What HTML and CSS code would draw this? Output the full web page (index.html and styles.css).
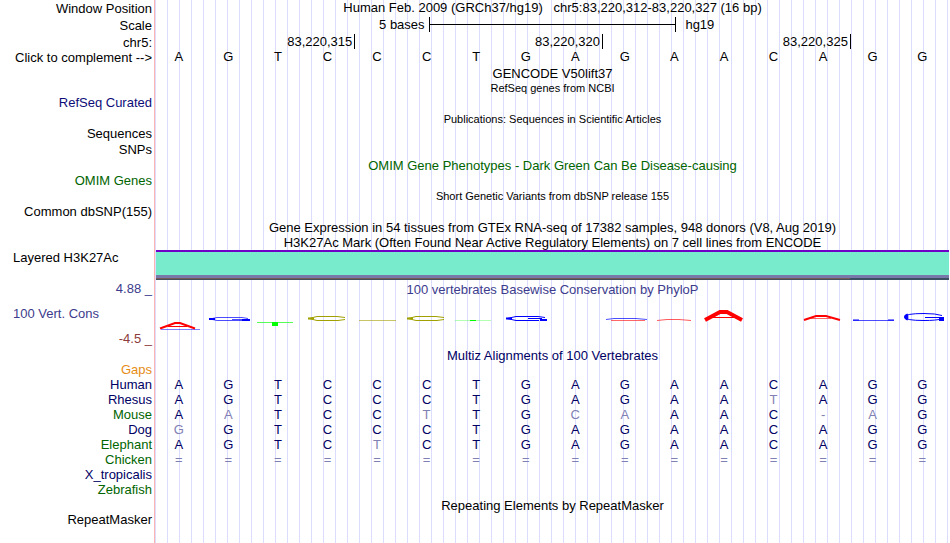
FILE: index.html
```
<!DOCTYPE html>
<html lang="en">
<head>
<meta charset="utf-8">
<title>Genome Browser</title>
<link rel="stylesheet" href="styles.css">
</head>
<body>
<main class="browser">
  <div class="labels">
    <div>Window Position</div>
    <div class="gap-xs">Scale</div>
    <div class="gap-xs">chr5:</div>
    <div>Click to complement --&gt;</div>
    <div class="gap-l navy">RefSeq Curated</div>
    <div class="gap-m">Sequences</div>
    <div class="gap-1">SNPs</div>
    <div class="gap-m green">OMIM Genes</div>
    <div class="gap-m">Common dbSNP(155)</div>
    <div class="gap-xl left">Layered H3K27Ac</div>
    <div class="gap-m slate">4.88 _</div>
    <div class="gap-s left slate">100 Vert. Cons</div>
    <div class="gap-s maroon">-4.5 _</div>
    <div class="gap-m orange">Gaps</div>
    <div class="deep">Human</div>
    <div class="deep">Rhesus</div>
    <div class="green">Mouse</div>
    <div class="deep">Dog</div>
    <div class="green">Elephant</div>
    <div class="green">Chicken</div>
    <div class="deep">X_tropicalis</div>
    <div class="green">Zebrafish</div>
    <div class="gap-n">RepeatMasker</div>
  </div>
  <div class="tracks">
    <div class="caption">Human Feb. 2009 (GRCh37/hg19) &nbsp; chr5:83,220,312-83,220,327 (16 bp)</div>
    <div class="scale gap-xs"><span class="scale-from">5 bases</span><span class="scale-bar"></span><span class="scale-to">hg19</span></div>
    <div class="ticks gap-xs"><span>83,220,315</span><span>83,220,320</span><span>83,220,325</span><span></span></div>
    <div class="bases"><span>A</span><span>G</span><span>T</span><span>C</span><span>C</span><span>C</span><span>T</span><span>G</span><span>A</span><span>G</span><span>A</span><span>A</span><span>C</span><span>A</span><span>G</span><span>G</span></div>
    <div class="caption gap-xs">GENCODE V50lift37</div>
    <div class="caption small">RefSeq genes from NCBI</div>
    <div class="caption small gap-m">Publications: Sequences in Scientific Articles</div>
    <div class="caption green gap-xl">OMIM Gene Phenotypes - Dark Green Can Be Disease-causing</div>
    <div class="caption small gap-m">Short Genetic Variants from dbSNP release 155</div>
    <div class="caption gap-m">Gene Expression in 54 tissues from GTEx RNA-seq of 17382 samples, 948 donors (V8, Aug 2019)</div>
    <div class="caption">H3K27Ac Mark (Often Found Near Active Regulatory Elements) on 7 cell lines from ENCODE</div>
    <div class="signal"><div class="signal-edge"></div></div>
    <div class="caption slate gap-xs">100 vertebrates Basewise Conservation by PhyloP</div>
    <svg class="conservation" viewBox="0 0 793 50" preserveAspectRatio="none" role="img" aria-label="Base conservation scores">
      <g fill="none" stroke="#f00">
        <path stroke-width="2" d="M4 31.500 19 26H24L39 31.500"/><path d="M12 29.500H31"/>
        <path opacity=".65" d="M501 23.500 511 22.500H523L535 23.500"/>
        <path stroke-width="4" d="M549 23 564 15H571L586 23"/><path d="M557 20.500H578"/>
        <path stroke-width="2" d="M648 23 660 19H670L684 23"/><path opacity=".6" d="M655 21.500H675"/>
        <path opacity=".6" d="M455 23.500H489"/>
      </g>
      <g fill="none" stroke="#00f">
        <path opacity=".5" d="M5 32.500H44"/>
        <path opacity=".7" d="M92 21.500 86 20.500H61L54 22 61 23.500H88M76 22.500H90"/><path stroke-width="2" d="M86 23H94M53 22H59"/>
        <path d="M389 20.500 382 19.500H360L351 21.500 360 23.500H383M372 21.500H386"/><path stroke-width="2" d="M384 23H391M350 21.500H356"/>
        <path opacity=".7" d="M450 22.500 458 21.500H480L491 22.500"/>
        <path opacity=".7" d="M697 23.500H738"/><path opacity=".5" stroke-width="2" d="M697 23H703M732 23H738"/>
        <path d="M786 18.500Q780 16.500 768 16.500 749 16.500 749 20 749 23.500 768 23.500 780 23.500 785 22"/><path stroke-width="3" d="M752 18Q747 20 752 22"/><path d="M769 20.500H788"/><path stroke-width="3" d="M783 22.500H788"/>
      </g>
      <g fill="none" stroke="#a0a000">
        <path d="M189 20.500 181 19.500H161L153 21.500 161 23.500H182L189 22.500"/><path stroke-width="2" d="M152 21.500H158"/>
        <path opacity=".6" d="M203 23.500H240"/>
        <path d="M288 20.500 280 19.500H260L252 21.500 260 23.500H281L288 22.500"/><path stroke-width="2" d="M251 21.500H257"/>
      </g>
      <g fill="#0f0"><path opacity=".65" d="M101 25h36v1h-36z"/><path d="M116 25h6v4h-6z"/><path opacity=".3" d="M299 23h36v1h-36z"/><path d="M314 23h6v1h-6z"/></g>
    </svg>
    <div class="caption deep gap-1">Multiz Alignments of 100 Vertebrates</div>
    <div class="alignment deep">
      <div class="bases"><span>A</span><span>G</span><span>T</span><span>C</span><span>C</span><span>C</span><span>T</span><span>G</span><span>A</span><span>G</span><span>A</span><span>A</span><span>C</span><span>A</span><span>G</span><span>G</span></div>
      <div class="bases"><span>A</span><span>G</span><span>T</span><span>C</span><span>C</span><span>C</span><span>T</span><span>G</span><span>A</span><span>G</span><span>A</span><span>A</span><span class="pale">T</span><span>A</span><span>G</span><span>G</span></div>
      <div class="bases"><span>A</span><span class="pale">A</span><span>T</span><span>C</span><span>C</span><span class="pale">T</span><span>T</span><span>G</span><span class="pale">C</span><span class="pale">A</span><span>A</span><span>A</span><span>C</span><span class="pale">-</span><span class="pale">A</span><span>G</span></div>
      <div class="bases"><span class="pale">G</span><span>G</span><span>T</span><span>C</span><span>C</span><span>C</span><span>T</span><span>G</span><span>A</span><span>G</span><span>A</span><span>A</span><span>C</span><span>A</span><span>G</span><span>G</span></div>
      <div class="bases"><span>A</span><span>G</span><span>T</span><span>C</span><span class="pale">T</span><span>C</span><span>T</span><span>G</span><span>A</span><span>G</span><span>A</span><span>A</span><span>C</span><span>A</span><span>G</span><span>G</span></div>
      <div class="bases pale"><span>=</span><span>=</span><span>=</span><span>=</span><span>=</span><span>=</span><span>=</span><span>=</span><span>=</span><span>=</span><span>=</span><span>=</span><span>=</span><span>=</span><span>=</span><span>=</span></div>
    </div>
    <div class="caption gap-xl">Repeating Elements by RepeatMasker</div>
  </div>
</main>
</body>
</html>
```
FILE: styles.css
```
* { box-sizing: border-box; }

body {
  margin: 0;
  background: #fff;
  color: #000;
  font: 13px/15px "Liberation Sans", Arial, sans-serif;
}

.browser {
  display: grid;
  grid-template-columns: 154px 1fr;
  min-height: 100vh;
}

.labels {
  padding: 1px 2px 0 13px;
  text-align: right;
  white-space: nowrap;
}

.labels .left { text-align: left; }

/* Guide lines repeat every 12px behind all tracks. */
.tracks {
  border-left: 1px solid #ffb4b4;
  padding: 0 1px;
  background: linear-gradient(to right, #dcdcff 1px, transparent 1px) 12px 0 / 12px 100% padding-box;
}

.caption { text-align: center; white-space: nowrap; }
.small { font-size: 11px; }

.gap-1 { margin-top: 1px; }
.gap-xs { margin-top: 2px; }
.gap-s { margin-top: 10px; }
.gap-n { margin-top: 15px; }
.gap-m { margin-top: 16px; }
.gap-l { margin-top: 30px; }
.gap-xl { margin-top: 31px; }

.navy { color: #0c0c78; }
.deep { color: #000064; }
.green { color: #006400; }
.slate { color: #3c3c8c; }
.maroon { color: #8c3c3c; }
.orange { color: #e68c14; }
.pale { color: #8080b4; }

.scale { display: grid; grid-template-columns: 1fr 31.25% 1fr; }
.scale-from { padding-right: 4px; text-align: right; }
.scale-to { padding-left: 9px; }
.scale-bar {
  border: solid #000;
  border-width: 0 1px;
  background: linear-gradient(#000, #000) center / 100% 1px no-repeat;
}

.ticks { display: grid; grid-template-columns: 4fr 5fr 5fr 2fr; }
.ticks span { padding-right: 2px; text-align: right; }
.ticks span + span { border-left: 1px solid #000; }

.bases { display: grid; grid-template-columns: repeat(16, 1fr); }
.bases span { padding-right: 4px; text-align: center; }
.alignment { margin-top: 14px; }

.signal {
  padding-top: 23px;
  border-top: 2px solid #6e00c8;
  background: #78ebcd;
}
.signal-edge {
  height: 5px;
  background:
    linear-gradient(#3c5064, #3c5064) right bottom / 12.5% 2px no-repeat,
    linear-gradient(#7878aa 3px, #785a5a 3px 4px, #46505a 4px);
}

.conservation { display: block; width: 100%; height: 50px; }
```
